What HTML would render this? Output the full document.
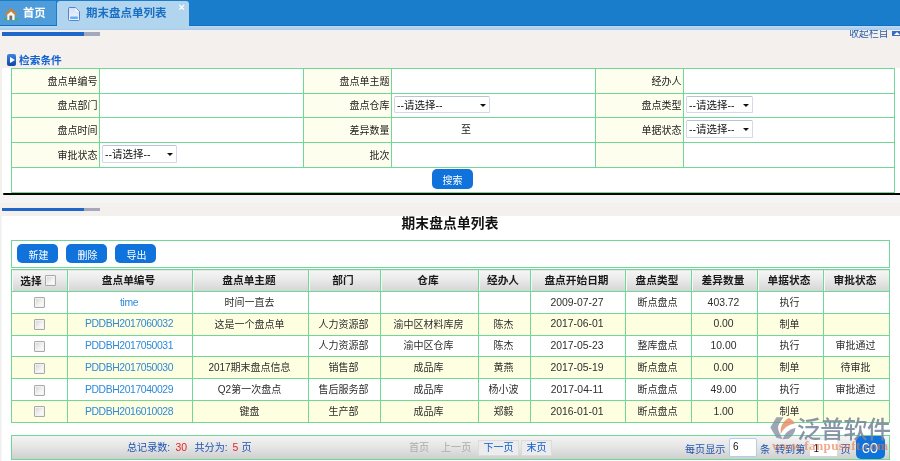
<!DOCTYPE html>
<html lang="zh-CN">
<head>
<meta charset="utf-8">
<title>期末盘点单列表</title>
<style>
*{box-sizing:border-box;margin:0;padding:0}
html,body{width:900px;height:461px;overflow:hidden}
body{-webkit-font-smoothing:antialiased;will-change:transform}
body{position:relative;background:#f3f0ed;font-family:"Liberation Sans","Noto Sans CJK SC",sans-serif;font-size:10px;color:#222;line-height:1}
.abs{position:absolute}
/* top bar */
#bar{left:0;top:0;width:900px;height:26px;background:#1a7dcb;border-bottom:1px solid #0f73c5}
#band{left:0;top:26px;width:900px;height:4.200px;background:linear-gradient(#bfdaf1,#a6cbeb)}
#home{left:0;top:1px;width:55.500px;height:24px;background:#4f9cda}
#home span{position:absolute;left:23px;top:6.500px;color:#fff;font-weight:bold;font-size:11.300px}
#tab{left:57px;top:1px;width:131.500px;height:28px;background:#b1d4ef;border-radius:3px 3px 0 0}
#tab span.t{position:absolute;left:29px;top:6.800px;color:#1a6fc2;font-weight:bold;font-size:11.5px;white-space:nowrap}
#tab span.x{position:absolute;left:121.500px;top:1px;color:#fff;font-size:11px;font-weight:bold;font-family:"Liberation Sans",sans-serif}
.prog{left:2px;width:98px;height:3.300px;background:#a5a8bd}
.prog i{display:block;width:82px;height:3.300px;background:#1f66c9}
#collapse{left:846px;top:30px;width:54px;height:10px;overflow:hidden}
#collapse span{position:absolute;left:3.300px;top:-.700px;color:#2a5aa8;font-size:9.8px;white-space:nowrap}
#collapse i{position:absolute;left:46.200px;top:.600px;width:8px;height:5.500px;background:#3a6fc0}
#collapse i:after{content:"";position:absolute;left:2px;top:1px;border-bottom:3px solid #fff;border-left:3px solid transparent;border-right:3px solid transparent}
/* white panels */
#w1{left:2px;top:67.500px;width:898px;height:125.500px;background:#fff}
#w2{left:0;top:216px;width:900px;height:245px;background:linear-gradient(to right,#ececec,#f6f6f6 1.500px,#fff 2.500px)}
#black{left:3.300px;top:192.700px;width:897px;height:2.600px;background:#050505;border-radius:1.300px 0 0 1.300px}
#gstrip{left:0;top:195.300px;width:900px;height:7.400px;background:#f4f4f4}
#sicon{left:6.500px;top:54px;width:9.500px;height:12.300px;border-radius:2px;background:linear-gradient(#3f86de,#0d45a3)}
#sicon:after{content:"";position:absolute;left:3px;top:3px;border-left:5px solid #fff;border-top:3px solid transparent;border-bottom:3px solid transparent}
#stitle{left:19px;top:55px;color:#1462d0;font-weight:bold;font-size:10.7px;white-space:nowrap}
/* search table */
table{border-collapse:collapse;table-layout:fixed}
#st{left:11px;top:68px;width:883px}
#st td{border:1px solid #70d796;height:25px;background:#fff;font-size:10px;vertical-align:middle;white-space:nowrap}
#st tr.r24 td{height:24px}
#st td.l{background:#fefeef;text-align:right;padding:1px 1.500px 0 0;color:#222}
.sel{display:inline-block;position:relative;top:-1px;height:17.700px;border:1px solid #d3d9e6;border-top-color:#bcc3d2;border-radius:1.500px;background:#fff;vertical-align:middle;margin-left:1.500px;font-size:10.500px;line-height:16.500px;padding-left:2.500px;color:#111;text-align:left}
.sel:after{content:"";position:absolute;right:2.500px;top:7px;border-top:3.500px solid #111;border-left:3.500px solid transparent;border-right:3.500px solid transparent}
#sbtn{left:432px;top:169px;width:41px;height:19.500px;background:#0f73db;border-radius:5px;color:#fff;text-align:center;line-height:23px;font-size:10px;overflow:hidden}
#ltitle{left:0;top:217px;width:900px;text-align:center;font-size:13.7px;font-weight:bold;color:#111;letter-spacing:.2px}
/* list */
#tool{left:11px;top:240px;width:879px;height:28px;border:1px solid #70d796;background:#fff}
.btn{position:absolute;top:243.600px;width:41px;height:19.400px;background:#0f73db;border-radius:5px;color:#fff;text-align:center;line-height:23.500px;font-size:10px;padding-left:2px;overflow:hidden}
#lt{left:11px;top:269px;width:878px}
#lt td,#lt th{border:1px solid #70d796;height:21.850px;padding:1px 2px 0 0;text-align:center;font-size:10px;vertical-align:middle;white-space:nowrap;overflow:hidden;color:#2e2e2e}
#lt th{background:linear-gradient(#f6f6f6,#e9e9e9 45%,#d4d4d4);font-weight:bold;color:#1a1a1a;font-size:10.7px;padding:0 3px 1px 0;box-shadow:inset 1px 0 0 #f8f8f8}
#lt tr.o td{background:#fff}
#lt tr.e td{background:#fefee1}
#lt td.k{color:#2f8ad6;font-size:10.400px;letter-spacing:-.4px}
#lt td.n{font-size:10.400px}
.cb{display:inline-block;width:11px;height:11px;border:1px solid #a9a9a9;border-radius:1px;background:linear-gradient(135deg,#d2d2d2,#f4f4f4 60%,#fdfdfd);vertical-align:middle;box-shadow:inset 0 0 0 1px #f2f2f2}
#lt td .cb{margin-left:2.500px}
/* pager */
#pg{left:11px;top:435px;width:879px;height:24.500px;border:1px solid #70d796;background:linear-gradient(#f4f4f4,#e4e4e4 50%,#cfcfcf)}
.pt{position:absolute;white-space:nowrap;font-size:10.100px;color:#1f55b0}
.pn{font-size:10.400px}
#go{left:856px;top:436px;width:29px;height:23px;background:#0f73db;border-radius:5px;color:#fff;text-align:center;font-family:"Liberation Sans",sans-serif;font-size:15.500px;line-height:24px}
#go b{display:inline-block;font-weight:normal;transform:scaleX(.66)}
#wmt{left:797px;top:417.700px;font-size:24px;font-weight:500;color:#7a869d;opacity:.88;white-space:nowrap;letter-spacing:-.7px}
#wmu{left:772px;top:438.700px;font-family:"Liberation Serif",serif;font-weight:bold;font-size:13px;color:#e27848;opacity:.62;white-space:nowrap;letter-spacing:.4px}
.pin{position:absolute;height:18px;background:#fff;border:1px solid #cfd6e0;font-size:10px;line-height:16px;padding-left:3px;color:#111}
.pb{position:absolute;top:439.500px;height:16px;border:1px solid #dcdcdc;background:#ececec;color:#0a5cd0;font-size:10px;line-height:14px;text-align:center}
</style>
</head>
<body>
<div class="abs" id="bar"></div>
<div class="abs" id="band"></div>
<div class="abs" id="home">
<svg class="abs" style="left:4px;top:6.500px" width="14" height="13" viewBox="0 0 14 13"><path d="M0 10.300 H13.600 V12.200 H0Z" fill="#4fae3a"/><path d="M7 0.300 L13.300 6.300 L12 7.200 L2 7.200 L0.700 6.300Z" fill="#c98b45"/><path d="M7 3.400 L10.600 6.800 V12 H3.300 V6.800Z" fill="#f6f6f4"/><path d="M7 0.300 L13.300 6.300 L12.300 7.300 L7 2.600 L1.700 7.300 L0.700 6.300Z" fill="#c48238"/><rect x="5.400" y="7.600" width="2.800" height="4.400" fill="#77706a"/></svg>
<span>首页</span></div>
<div class="abs" id="tab">
<svg class="abs" style="left:11px;top:6.300px" width="12" height="14" viewBox="0 0 12 14"><defs><linearGradient id="dg" x1="0" y1="0" x2="0" y2="1"><stop offset="0" stop-color="#cfe0f7"/><stop offset="1" stop-color="#f2f7fd"/></linearGradient></defs><path d="M1.500 0.500 H7.500 L11.500 4.500 V12.500 Q11.500 13.500 10.500 13.500 H1.500 Q0.500 13.500 0.500 12.500 V1.500 Q0.500 0.500 1.500 0.500Z" fill="url(#dg)" stroke="#5b7fcb"/><path d="M7.500 0.800 V4.500 H11.200Z" fill="#f4f8ff"/><rect x="2" y="9.500" width="8" height="2.500" rx="1" fill="#5fb2f4"/></svg>
<span class="t">期末盘点单列表</span><span class="x">×</span></div>
<div class="abs prog" style="top:32.400px"><i></i></div>
<div class="abs" id="collapse"><span>收起栏目</span><i></i></div>

<div class="abs" id="w1"></div>
<div class="abs" id="w2"></div>
<div class="abs" id="sicon"></div>
<div class="abs" id="stitle">检索条件</div>

<table class="abs" id="st">
<colgroup><col style="width:88px"><col style="width:204px"><col style="width:88px"><col style="width:204px"><col style="width:88px"><col style="width:211px"></colgroup>
<tr><td class="l">盘点单编号</td><td></td><td class="l">盘点单主题</td><td></td><td class="l">经办人</td><td></td></tr>
<tr class="r24"><td class="l">盘点部门</td><td></td><td class="l">盘点仓库</td><td><span class="sel" style="width:96px">--请选择--</span></td><td class="l">盘点类型</td><td><span class="sel" style="width:67px">--请选择--</span></td></tr>
<tr><td class="l">盘点时间</td><td></td><td class="l">差异数量</td><td style="text-align:left;padding-left:69px">至</td><td class="l">单据状态</td><td><span class="sel" style="width:67px">--请选择--</span></td></tr>
<tr><td class="l">审批状态</td><td><span class="sel" style="width:75px">--请选择--</span></td><td class="l">批次</td><td></td><td class="l"></td><td></td></tr>
<tr><td colspan="6"></td></tr>
</table>
<div class="abs" id="sbtn">搜索</div>
<div class="abs" id="gstrip"></div>
<div class="abs" id="black"></div>
<div class="abs prog" style="top:208.200px"><i></i></div>
<div class="abs" id="ltitle">期末盘点单列表</div>

<div class="abs" id="tool"></div>
<div class="btn" style="left:17px">新建</div>
<div class="btn" style="left:66px">删除</div>
<div class="btn" style="left:115px">导出</div>

<table class="abs" id="lt">
<colgroup><col style="width:56px"><col style="width:125px"><col style="width:116px"><col style="width:72px"><col style="width:98px"><col style="width:52px"><col style="width:95px"><col style="width:66px"><col style="width:66px"><col style="width:66px"><col style="width:66px"></colgroup>
<tr><th><span style="position:relative;top:1.500px">选择</span> <i class="cb"></i></th><th>盘点单编号</th><th>盘点单主题</th><th>部门</th><th>仓库</th><th>经办人</th><th>盘点开始日期</th><th>盘点类型</th><th>差异数量</th><th>单据状态</th><th>审批状态</th></tr>
<tr class="o"><td><i class="cb"></i></td><td class="k">time</td><td>时间一直去</td><td></td><td></td><td></td><td class="n">2009-07-27</td><td>断点盘点</td><td class="n">403.72</td><td>执行</td><td></td></tr>
<tr class="e"><td><i class="cb"></i></td><td class="k">PDDBH2017060032</td><td>这是一个盘点单</td><td>人力资源部</td><td>渝中区材料库房</td><td>陈杰</td><td class="n">2017-06-01</td><td></td><td class="n">0.00</td><td>制单</td><td></td></tr>
<tr class="o"><td><i class="cb"></i></td><td class="k">PDDBH2017050031</td><td></td><td>人力资源部</td><td>渝中区仓库</td><td>陈杰</td><td class="n">2017-05-23</td><td>整库盘点</td><td class="n">10.00</td><td>执行</td><td>审批通过</td></tr>
<tr class="e"><td><i class="cb"></i></td><td class="k">PDDBH2017050030</td><td>2017期末盘点信息</td><td>销售部</td><td>成品库</td><td>黄燕</td><td class="n">2017-05-19</td><td>断点盘点</td><td class="n">0.00</td><td>制单</td><td>待审批</td></tr>
<tr class="o"><td><i class="cb"></i></td><td class="k">PDDBH2017040029</td><td>Q2第一次盘点</td><td>售后服务部</td><td>成品库</td><td>杨小波</td><td class="n">2017-04-11</td><td>断点盘点</td><td class="n">49.00</td><td>执行</td><td>审批通过</td></tr>
<tr class="e"><td><i class="cb"></i></td><td class="k">PDDBH2016010028</td><td>键盘</td><td>生产部</td><td>成品库</td><td>郑毅</td><td class="n">2016-01-01</td><td>断点盘点</td><td class="n">1.00</td><td>制单</td><td></td></tr>
</table>

<div class="abs" id="pg"></div>
<span class="pt" style="left:127px;top:442.500px">总记录数:</span>
<span class="pt pn" style="left:175.500px;top:442.500px;color:#e8221e">30</span>
<span class="pt" style="left:194.500px;top:442.500px">共分为:</span>
<span class="pt pn" style="left:232.500px;top:442.500px;color:#e8221e">5</span>
<span class="pt" style="left:241.500px;top:442.500px">页</span>
<span class="pt" style="left:409px;top:443px;color:#ababab">首页</span>
<span class="pt" style="left:441px;top:443px;color:#ababab">上一页</span>
<div class="pb" style="left:478px;width:41px">下一页</div>
<div class="pb" style="left:521px;width:31px">末页</div>
<span class="pt" style="left:685px;top:445px">每页显示</span>
<div class="pin" style="left:729px;top:438px;width:28px;height:18.500px;border:1px solid #b5cdec;border-radius:2px">6</div>
<span class="pt" style="left:760px;top:445px">条</span>
<span class="pt" style="left:775px;top:445px">转到第</span>
<div class="pin" style="left:810px;top:440px;width:27px;height:16px;border:0;line-height:17px;padding-left:3.500px">1</div>
<span class="pt" style="left:840.500px;top:445px">页</span>
<div class="abs" id="go"><b>GO</b></div>

<!-- watermark -->
<svg class="abs" style="left:760px;top:405px;opacity:.8" width="100" height="56" viewBox="0 0 823 461"><path d="M135 100 L192 100 L160 150 Q138 188 160 228 L186 282 L135 270 L85 185 Z" fill="#8690a4"/><path d="M170 238 Q160 150 235 106 Q272 118 287 152 Q205 165 170 238Z" fill="#e68a62"/><path d="M186 282 Q205 212 292 188 Q290 240 236 278 Z" fill="#8690a4"/></svg>
<div class="abs" id="wmt">泛普软件</div>
<div class="abs" id="wmu">www.fanpusoft.com</div>
</body>
</html>
